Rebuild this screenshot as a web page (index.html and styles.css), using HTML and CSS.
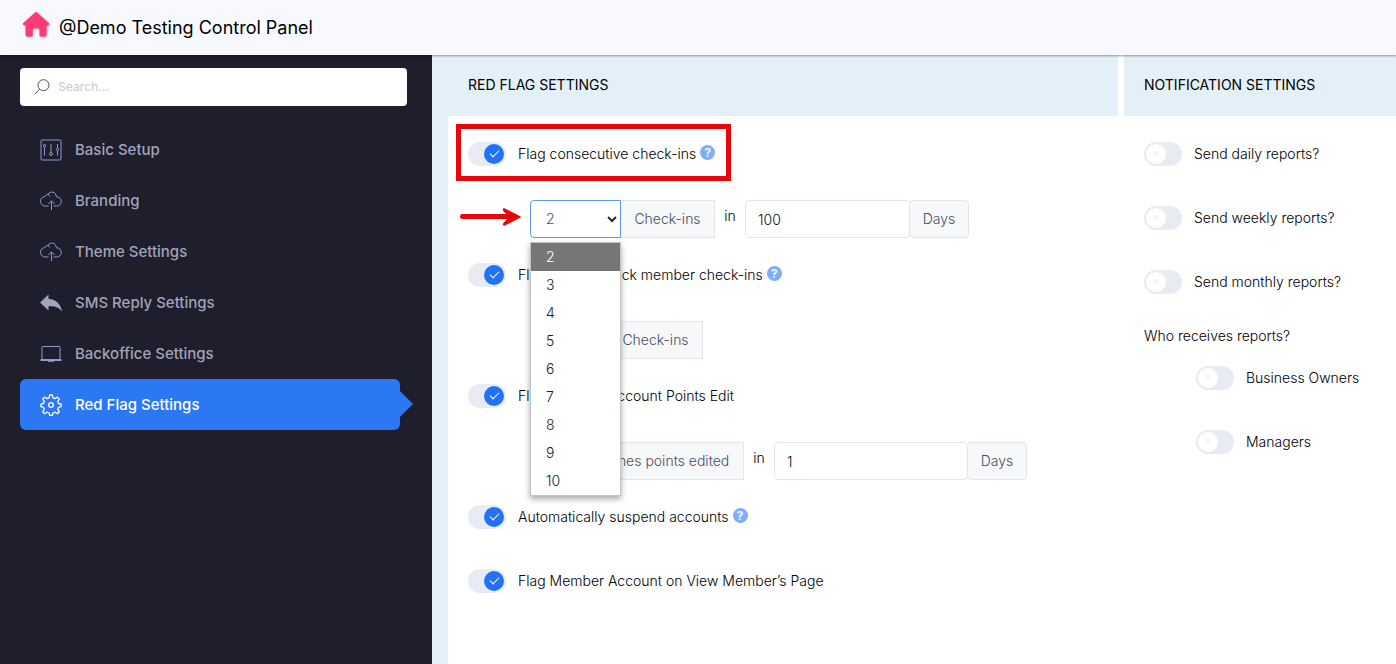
FILE: index.html
```html
<!DOCTYPE html>
<html lang="en">
<head>
  <meta charset="UTF-8" />
  <meta name="viewport" content="width=device-width, initial-scale=1.0"/>
  <title>Control Panel - Red Flag Settings</title>
  <link rel="stylesheet" href="styles.css">
</head>
<body>

  <header class="topbar">
    <a href="#" class="home" aria-label="Home">
      <svg width="28" height="26" viewBox="0 0 28 26"><path fill="#ff3a76" d="M12.6.7a2 2 0 0 1 2.8 0L26.7 11c1 1 .5 2.2-.9 2.2h-1.3v9.6a1.6 1.6 0 0 1-1.6 1.6h-4.3a1.2 1.2 0 0 1-1.2-1.2v-5.4a1.6 1.6 0 0 0-1.6-1.6h-3.6a1.6 1.6 0 0 0-1.6 1.6v5.4a1.2 1.2 0 0 1-1.2 1.2H5.100a1.600 1.600 0 0 1-1.600-1.600v-9.600H2.200c-1.400 0-1.900-1.200-.9-2.200z"/></svg>
    </a>
    <h1>@Demo Testing Control Panel</h1>
  </header>

  <div class="layout">

    <aside class="sidebar">
      <form class="search">
        <svg width="16" height="16" viewBox="0 0 16 16" fill="none" stroke="#4b4f6b" stroke-width="1"><circle cx="9.500" cy="6.200" r="5.500"/><path d="M5.600 10.200 1 15"/></svg>
        <input type="text" placeholder="Search..." aria-label="Search">
      </form>

      <nav class="menu">
        <a href="#">
          <svg viewBox="0 0 22 22"><rect x="1" y="1" width="20" height="20" rx="1"/><path d="M4.500 8v8.500M4.500 5v.5M11 5v8.500M17.500 5v4M17.500 12v4.500"/><circle cx="4.500" cy="6.700" r="1.300"/><circle cx="11" cy="15" r="1.500"/><circle cx="17.500" cy="10.500" r="1.300"/></svg>
          <span>Basic Setup</span>
        </a>
        <a href="#">
          <svg viewBox="0 0 22 22"><path d="M8.500 16H5.500A4.700 4.700 0 0 1 5 6.500a3.500 3.500 0 0 1 3-2.200c2-3.800 8.200-2.700 8.300 2.500 3 0 5 2 5 4.700 0 2.500-2 4.500-4.600 4.500H13.500M8 4.300c1 .4 1.600 1.200 1.700 2.200M11.500 20v-8.500M8.300 14l3.200-3.200 3.200 3.200"/></svg>
          <span>Branding</span>
        </a>
        <a href="#">
          <svg viewBox="0 0 22 22"><path d="M8.500 16H5.500A4.700 4.700 0 0 1 5 6.500a3.500 3.500 0 0 1 3-2.200c2-3.800 8.200-2.700 8.300 2.500 3 0 5 2 5 4.700 0 2.500-2 4.500-4.600 4.500H13.500M8 4.300c1 .4 1.600 1.200 1.700 2.200M11.500 20v-8.500M8.300 14l3.200-3.200 3.200 3.200"/></svg>
          <span>Theme Settings</span>
        </a>
        <a href="#">
          <svg viewBox="0 0 22 22"><path class="solid" d="M0 10.500 8.500 2.500v4.200c7.500.6 12 5 13.500 12.800-3.200-4.400-7.500-5.500-13.500-5.200v4.200z"/></svg>
          <span>SMS Reply Settings</span>
        </a>
        <a href="#">
          <svg viewBox="0 0 22 22"><path d="M2 16V4.200a.7.7 0 0 1 .7-.7h16.600a.7.7 0 0 1 .7.7V16M.5 16.500h21M.5 17.500h21M8 18.300h6"/></svg>
          <span>Backoffice Settings</span>
        </a>
        <a href="#" class="active">
          <svg viewBox="0 0 22 22"><circle cx="11" cy="11" r="2.300"/><path d="M9.700 1h2.600l.6 2.800 2.100.9 2.400-1.600 1.900 1.900-1.600 2.400.9 2.100 2.500.6v2.600l-2.500.6-.9 2.100 1.600 2.400-1.900 1.900-2.400-1.600-2.100.9-.6 2.500H9.700l-.6-2.500L7 18.100l-2.400 1.600-1.900-1.900 1.600-2.400-.9-2.100L.9 12.700v-2.600l2.500-.6.9-2.100L2.700 5l1.900-1.900L7 4.700l2.100-.9z"/></svg>
          <span>Red Flag Settings</span>
        </a>
      </nav>
    </aside>

    <main class="content">

      <section class="panel">
        <h2>Red Flag Settings</h2>
        <div class="panel-body">

          <div class="toggle highlight">
            <input type="checkbox" id="flagConsecutive" checked>
            <label for="flagConsecutive">Flag consecutive check-ins</label>
            <button type="button" class="help" aria-label="Help">?</button>
          </div>
          <div class="fields">
            <svg class="arrow" width="62" height="20" viewBox="0 0 62 20"><path d="M2.500 9.500H55" stroke="#e60808" stroke-width="5" stroke-linecap="round"/><path fill="#e60808" d="M61.500 10 45 18.500c-2 .8-2.800-1.400-1.300-2.700L49 10l-5.500-5.800C42 2.500 43 .6 45 1.500z"/></svg>
            <div class="group">
              <select class="first open" aria-label="Consecutive check-ins">
                <option>2</option>
              </select>
              <svg class="chevron" width="10" height="7" viewBox="0 0 10 7"><path d="M1 1l4 4 4-4" fill="none" stroke="#222b3a" stroke-width="2"/></svg>
              <span class="addon">Check-ins</span>
              <ul class="dropdown">
                <li class="selected">2</li>
                <li>3</li>
                <li>4</li>
                <li>5</li>
                <li>6</li>
                <li>7</li>
                <li>8</li>
                <li>9</li>
                <li>10</li>
              </ul>
            </div>
            <span class="in">in</span>
            <div class="group">
              <input type="text" class="days" value="100" aria-label="Number of days">
              <span class="addon round">Days</span>
            </div>
          </div>

          <div class="toggle">
            <input type="checkbox" id="flagBack" checked>
            <label for="flagBack">Flag back-to-back member check-ins</label>
            <button type="button" class="help" aria-label="Help">?</button>
          </div>
          <div class="fields">
            <div class="group">
              <select class="second" aria-label="Back to back check-ins">
                <option>2</option>
              </select>
              <span class="addon">Check-ins</span>
            </div>
          </div>

          <div class="toggle">
            <input type="checkbox" id="flagPoints" checked>
            <label for="flagPoints">Flag Member Account Points Edit</label>
          </div>
          <div class="fields">
            <div class="group">
              <select class="third" aria-label="Points edits">
                <option>2</option>
              </select>
              <span class="addon times">Times points edited</span>
            </div>
            <span class="in">in</span>
            <div class="group">
              <input type="text" class="days wide" value="1" aria-label="Number of days for points edits">
              <span class="addon round">Days</span>
            </div>
          </div>

          <div class="toggle">
            <input type="checkbox" id="autoSuspend" checked>
            <label for="autoSuspend">Automatically suspend accounts</label>
            <button type="button" class="help" aria-label="Help">?</button>
          </div>
          <div class="toggle">
            <input type="checkbox" id="flagView" checked>
            <label for="flagView">Flag Member Account on View Member’s Page</label>
          </div>

        </div>
      </section>

      <section class="panel side">
        <h2>Notification Settings</h2>
        <div class="panel-body">
          <div class="toggle">
            <input type="checkbox" id="daily">
            <label for="daily">Send daily reports?</label>
          </div>
          <div class="toggle">
            <input type="checkbox" id="weekly">
            <label for="weekly">Send weekly reports?</label>
          </div>
          <div class="toggle">
            <input type="checkbox" id="monthly">
            <label for="monthly">Send monthly reports?</label>
          </div>
          <p>Who receives reports?</p>
          <div class="receivers">
            <div class="toggle">
              <input type="checkbox" id="owners">
              <label for="owners">Business Owners</label>
            </div>
            <div class="toggle">
              <input type="checkbox" id="managers">
              <label for="managers">Managers</label>
            </div>
          </div>
        </div>
      </section>

    </main>
  </div>

</body>
</html>
```
FILE: styles.css
```css
*, *::before, *::after { box-sizing: border-box; }
body { margin: 0; min-height: 100vh; display: flex; flex-direction: column; background: #fff; color: #000; font: 300 14px/20px Inter, sans-serif; }
input, select, button { font: inherit; margin: 0; }

/* header */
.topbar { position: relative; display: flex; align-items: center; gap: 9px; height: 55px; padding: 0 22px; background: #f8f9ff; box-shadow: 0 1px 2px rgba(0,0,0,0.4); }
.topbar h1 { margin: 0; font-size: 18px; font-weight: 400; line-height: 28px; color: #000; }
.home { height: 32px; }
.home svg { filter: drop-shadow(1px 1px 1px rgba(0,0,0,0.3)); }

.layout { flex: 1; display: flex; }

/* sidebar */
.sidebar { flex: 0 0 432px; padding: 13px 25px 13px 20px; background: #1e1e2d; }
.search { display: flex; align-items: center; gap: 8px; height: 38px; padding: 0 14px; background: #fff; border-radius: 4px; }
.search input { flex: 1; min-width: 0; border: 0; outline: 0; padding: 0; background: none; font-size: 12px; }
.search input::placeholder { color: #cfcfd4; font-weight: 500; }
.menu { margin: 18px 7px 0 0; }
.menu a { position: relative; display: flex; align-items: center; gap: 13px; height: 51px; padding: 0 20px; border-radius: 6px; color: #a2a3b7; font-size: 15px; font-weight: 500; text-decoration: none; }
.menu svg { width: 22px; height: 22px; fill: none; stroke: #8f9ad0; stroke-width: 1; }
.menu .solid { fill: #a2a5bd; stroke: none; }
.menu .active { background: #2c77f4; color: #fff; }
.menu .active svg { stroke: #fff; stroke-width: 1.3; stroke-linejoin: round; }
.menu .active::after { content: ""; position: absolute; left: 100%; top: 12px; border: 13px solid transparent; border-left-color: #2c77f4; border-right-width: 0; }

/* panels */
.content { flex: 1; display: flex; gap: 6px; min-width: 0; border-left: 16px solid #e4f0f8; }
.panel { flex: 1; min-width: 0; }
.panel.side { flex: 0 0 272px; }
.panel h2 { margin: 0; padding: 20px; height: 61px; background: #e4f0f8; font-size: 14px; line-height: 20px; font-weight: 400; text-transform: uppercase; }
.panel-body { padding: 26px 20px; }
.panel p { margin: 32px 0 20px; }

/* switches */
.toggle { position: relative; display: flex; align-items: center; height: 24px; }
.toggle + .toggle { margin-top: 40px; }
.toggle label { margin-left: 12px; padding-bottom: 1px; white-space: nowrap; }
.toggle input { appearance: none; position: relative; flex: none; width: 38px; height: 24px; border-radius: 12px; background: #e8ebf3; }
.toggle input::before { content: "✕"; position: absolute; left: 2px; top: 2px; width: 20px; height: 20px; border-radius: 50%; background: #fff; color: #eef0f4; font-size: 9px; text-align: center; }
.toggle input:checked::before { content: ""; left: 16px; background: #2272f5; }
.toggle input:checked::after { content: ""; position: absolute; left: 22px; top: 8px; width: 9px; height: 5px; border: solid #fff; border-width: 0 0 1px 1px; transform: rotate(-45deg); }
.help { width: 15px; height: 15px; margin: 0 0 3px 4px; padding: 0; border: 0; border-radius: 50%; background: #7eaefb; color: #fff; font-size: 12px; font-weight: 600; line-height: 15px; }
.highlight::after { content: ""; position: absolute; left: -12px; top: -18px; width: 275px; height: 57px; border: 5px solid #e60808; pointer-events: none; }
.receivers { padding-left: 52px; }

/* field rows */
.fields { position: relative; display: flex; margin: 34px 0 25px 62px; }
.group { position: relative; display: flex; height: 38px; }
.group select, .group input { height: 38px; padding: 0 12px; border: 1px solid #e2e5ec; border-radius: 4px; background: #fff; color: #111; }
.group select { appearance: none; padding: 0 15px; border-radius: 4px 0 0 4px; color: #495057; }
.group .open { border-color: #5b97f3; outline: 0; }
.chevron { position: absolute; left: 77px; top: 16px; pointer-events: none; }
.first { width: 91px; }
.second { width: 79px; }
.third { width: 58px; }
.days { width: 165px; }
.days.wide { width: 194px; }
.addon { width: 94px; border: 1px solid #e2e5ec; border-left: 0; background: #f7f8fa; color: #494d60; line-height: 36px; text-align: center; white-space: nowrap; }
.addon.times { width: 156px; }
.addon.round { width: 60px; margin-left: -1px; border-left: 1px solid #e2e5ec; border-radius: 4px; }
.in { width: 30px; padding-top: 6px; text-align: center; }
.arrow { position: absolute; left: -70px; top: 7px; }
.dropdown { position: absolute; z-index: 2; left: 0; top: 42px; width: 91px; margin: 0; padding: 0; list-style: none; background: #fff; border: 1px solid #c4c4c4; box-shadow: 0 3px 6px rgba(0,0,0,0.35); color: #222; }
.dropdown li { height: 28px; padding-left: 15px; line-height: 27px; }
.dropdown .selected { background: #767676; color: #fff; }
```
